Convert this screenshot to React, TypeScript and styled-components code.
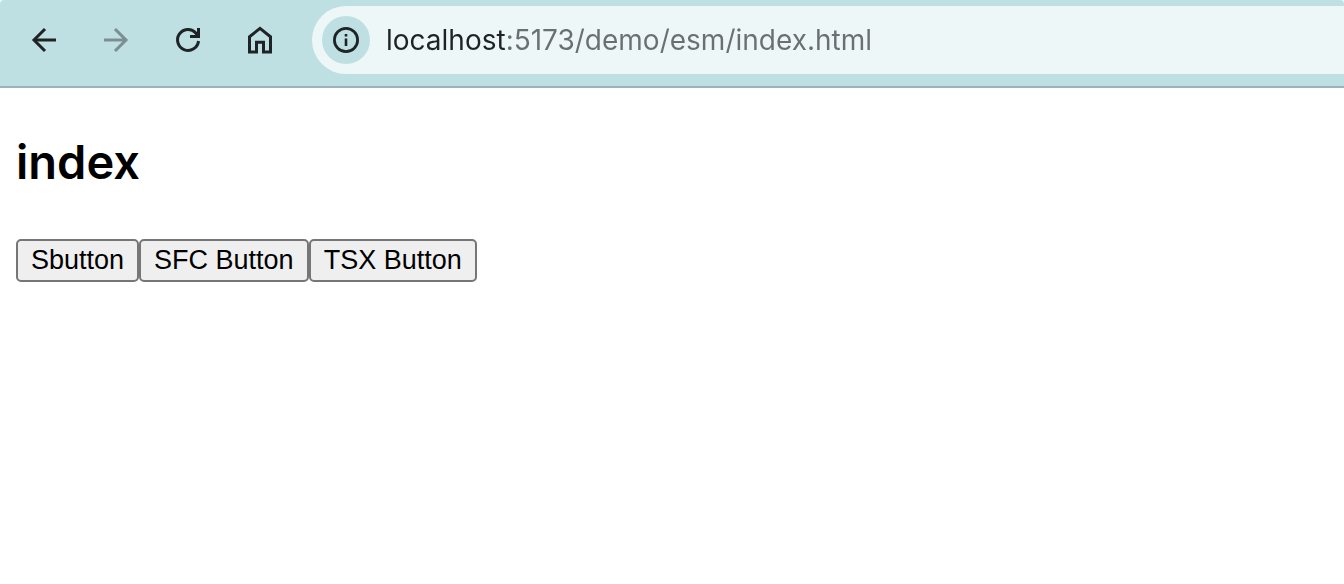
import React from "react";
import styled, { createGlobalStyle } from "styled-components";

const GlobalStyle = createGlobalStyle`
  * { box-sizing: border-box; }
  body {
    margin: 0;
    background: #fff;
    color: #000;
    font-family: Inter, "Liberation Sans", sans-serif;
  }
`;

const Toolbar = styled.header`
  display: flex;
  align-items: center;
  gap: 16px;
  padding: 6px 0 12px 8px;
  background: #bee0e2;
  border-bottom: 2px solid #9ab2b8;
  border-radius: 4px 4px 0 0;
`;

const NavGroup = styled.nav`
  display: flex;
  flex: none;
`;

const NavButton = styled.button`
  display: grid;
  place-items: center;
  width: 72px;
  height: 68px;
  padding: 0;
  border: 0;
  background: transparent;
  color: #1f2326;

  &:disabled {
    color: #7c8e92;
  }
`;

const AddressBar = styled.div`
  display: flex;
  flex: 1;
  align-items: center;
  gap: 16px;
  min-width: 0;
  height: 68px;
  padding-left: 10px;
  border-radius: 34px 0 0 34px;
  background: #eef7f8;
`;

const SiteInfo = styled.button`
  display: grid;
  flex: none;
  place-items: center;
  width: 48px;
  height: 48px;
  padding: 0;
  border: 0;
  border-radius: 50%;
  background: #bee0e2;
  color: #1f2326;
`;

const UrlInput = styled.input<{ $hostWidth: number }>`
  flex: 1;
  min-width: 0;
  height: 48px;
  padding: 0;
  border: 0;
  outline: 0;
  background: linear-gradient(
    to right,
    #1f2326 ${(p) => p.$hostWidth}px,
    #6a6f71 ${(p) => p.$hostWidth}px
  );
  background-clip: text;
  -webkit-background-clip: text;
  color: transparent;
  caret-color: #1f2326;
  font-family: Inter, "Liberation Sans", sans-serif;
  font-size: 28px;
`;

const Page = styled.main`
  padding: 44px 16px 16px;
`;

const Title = styled.h1`
  margin: 0 0 47px;
  font-size: 47px;
  font-weight: 600;
  line-height: 60px;
`;

const ButtonRow = styled.div`
  display: flex;
`;

const DemoButton = styled.button`
  height: 43px;
  padding: 0 13px 2px;
  border: 2px solid #767676;
  border-radius: 5px;
  background: #efefef;
  color: #000;
  font-family: "Liberation Sans", Arial, sans-serif;
  font-size: 27px;
  line-height: 32px;
`;

const Icon = ({ children }: { children: React.ReactNode }) => (
  <svg
    width="28"
    height="28"
    viewBox="0 0 28 28"
    fill="none"
    stroke="currentColor"
    strokeWidth="3"
    aria-hidden="true"
  >
    {children}
  </svg>
);

export default function App() {
  return (
    <>
      <GlobalStyle />
      <Toolbar>
        <NavGroup aria-label="Browser navigation">
          <NavButton aria-label="Back">
            <Icon>
              <path d="M26 14H4" />
              <path d="M15 3 4 14l11 11" />
            </Icon>
          </NavButton>
          <NavButton aria-label="Forward" disabled>
            <Icon>
              <path d="M2 14h22M13 3l11 11-11 11" />
            </Icon>
          </NavButton>
          <NavButton aria-label="Reload">
            <Icon>
              <path d="M24.5 15A10.5 10.5 0 1 1 21.8 6.9L24 9.5" />
              <path d="M24.5 2v8.5H16" />
              <path d="M24 5.5V10h-4.5z" fill="currentColor" stroke="none" />
            </Icon>
          </NavButton>
          <NavButton aria-label="Home">
            <Icon>
              <path d="M3.5 26V10.8L14 2.4l10.5 8.4V26h-7V16.2h-7V26z" />
            </Icon>
          </NavButton>
        </NavGroup>
        <AddressBar>
          <SiteInfo aria-label="View site information">
            <Icon>
              <circle cx="14" cy="14" r="11.6" strokeWidth="2.8" />
              <path d="M14 12.5V20M14 8v2.4" strokeWidth="2.6" />
            </Icon>
          </SiteInfo>
          <UrlInput
            $hostWidth={120}
            aria-label="Address"
            defaultValue="localhost:5173/demo/esm/index.html"
            spellCheck={false}
          />
        </AddressBar>
      </Toolbar>
      <Page>
        <Title>index</Title>
        <ButtonRow>
          <DemoButton>Sbutton</DemoButton>
          <DemoButton>SFC Button</DemoButton>
          <DemoButton>TSX Button</DemoButton>
        </ButtonRow>
      </Page>
    </>
  );
}
